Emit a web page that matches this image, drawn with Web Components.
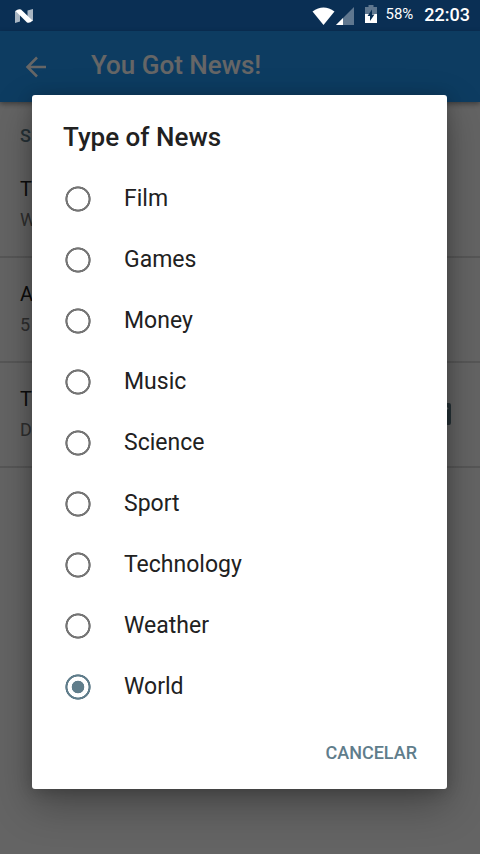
<!DOCTYPE html>
<html lang="en">
<head>
<meta charset="utf-8">
<meta name="viewport" content="width=device-width, initial-scale=1">
<title>You Got News!</title>
<style>
  html, body { margin: 0; min-height: 100%; background: #fafafa; }
  body { font-family: Roboto, "Noto Sans", sans-serif; color: #212121; }
</style>
</head>
<body>
<news-screen>
  <status-bar slot="status" battery="58%" time="22:03"></status-bar>
  <app-bar slot="bar">You Got News!</app-bar>
  <section-title>S</section-title>
  <setting-row><span>T</span><span slot="summary">W</span></setting-row>
  <setting-row><span>A</span><span slot="summary">5</span></setting-row>
  <setting-row>
    <span>T</span><span slot="summary">D</span>
    <svg slot="widget" width="28" height="22" viewBox="0 0 28 22" aria-hidden="true"><rect width="28" height="22" rx="2" fill="#607d8b"/><path d="M3 5l11 7 11-7" fill="none" stroke="#fafafa" stroke-width="2"/></svg>
  </setting-row>
  <choice-dialog slot="dialog" heading="Type of News" action="CANCELAR">
    <choice-list label="Type of News" selected="World" options="Film,Games,Money,Music,Science,Sport,Technology,Weather,World"></choice-list>
  </choice-dialog>
</news-screen>

<script>
  const define = (name, render) => customElements.define(name, class extends HTMLElement {
    constructor() {
      super();
      this.attachShadow({ mode: 'open' }).innerHTML = render(this);
    }
  });

  define('news-screen', () => `
    <style>
      :host { display: grid; grid-template-rows: auto 1fr; min-height: 100vh; }
      .body { position: relative; isolation: isolate; }
      .overlay {
        position: absolute; inset: 0; z-index: 2; background: rgba(0, 0, 0, .6);
        display: flex; align-items: center; padding: 0 33px 1px 32px;
      }
      ::slotted(choice-dialog) { flex: 1; }
    </style>
    <slot name="status"></slot>
    <div class="body">
      <slot name="bar"></slot>
      <main><slot></slot></main>
      <div class="overlay"><slot name="dialog"></slot></div>
    </div>`);

  define('status-bar', el => `
    <style>
      :host {
        display: flex; align-items: center; box-sizing: border-box; height: 31px;
        padding: 0 10px 0 14px; background: #0a2f54; color: #fff;
      }
      svg { display: block; }
      .wifi { margin-left: auto; }
      .battery { margin: 0 8px 3px 10px; }
      .level { font-size: 15px; line-height: 29px; margin-right: 11px; padding-bottom: 2px; }
      .time { font-size: 18px; font-weight: 500; line-height: 29px; padding-bottom: 2px; }
    </style>
    <svg width="20" height="16" viewBox="0 0 20 16" aria-hidden="true">
      <path d="M1 3L6 2v11.500L1 15zM13.500 2.500L19 1v12l-5.500 1z" fill="#fff" opacity=".65"/>
      <path d="M1.500 3Q4 0.500 7 1.500L18.500 12.500Q16 15.500 13 14.500z" fill="#fff"/>
    </svg>
    <svg class="wifi" width="23" height="18" viewBox="0 0 23 18" aria-hidden="true"><path d="M0.500 4.500Q11.500-3.500 22.500 4.500L11.500 18z" fill="#fff"/></svg>
    <svg width="20" height="18" viewBox="0 0 20 18" aria-hidden="true"><path d="M19 0v18H1z" fill="#fff" opacity=".35"/><path d="M8 11v7H1z" fill="#fff"/></svg>
    <svg class="battery" width="12" height="18" viewBox="0 0 12 18" aria-hidden="true">
      <path d="M3.500 0h5v2H12v7H0V2h3.500z" fill="#fff" opacity=".35"/>
      <path d="M0 9h12v9H0z" fill="#fff"/>
      <path d="M7 4.500L2.500 11H5v5l4.500-6.500H7z" fill="#0a2f54"/>
    </svg>
    <span class="level">${el.getAttribute('battery')}</span>
    <time class="time">${el.getAttribute('time')}</time>`);

  define('app-bar', () => `
    <style>
      :host {
        display: flex; align-items: center; box-sizing: border-box; height: 71px;
        padding: 0 24px; gap: 43px; position: relative; z-index: 1;
        background: #2196f3; color: #fff; box-shadow: 0 2px 5px rgba(0, 0, 0, .4);
      }
      button { padding: 0; border: 0; background: none; color: inherit; }
      svg { display: block; }
      h1 { margin: 0; font-size: 26px; font-weight: 500; line-height: 32px; padding-bottom: 3px; }
    </style>
    <button type="button" aria-label="Back">
      <svg width="24" height="24" viewBox="0 0 24 24" fill="none" stroke="currentColor" stroke-width="2.500"><path d="M22 12H4M13 2.500L3.500 12L13 21.500"/></svg>
    </button>
    <h1><slot></slot></h1>`);

  define('section-title', () => `
    <style>
      :host { display: block; padding: 22px 20px 5px; font-size: 18px; font-weight: 500; line-height: 24px; color: #607d8b; }
    </style>
    <slot></slot>`);

  define('setting-row', () => `
    <style>
      :host {
        display: flex; align-items: center; justify-content: space-between;
        padding: 23px 29px 24px 20px; border-bottom: 2px solid #dadada;
      }
      .text { display: grid; gap: 6px; }
      .title { font-size: 20px; line-height: 26px; }
      .summary { font-size: 18px; line-height: 24px; color: #757575; }
    </style>
    <div class="text">
      <div class="title"><slot></slot></div>
      <div class="summary"><slot name="summary"></slot></div>
    </div>
    <slot name="widget"></slot>`);

  define('choice-dialog', el => `
    <style>
      :host {
        display: block; background: #fff; border-radius: 3px;
        box-shadow: 0 16px 40px rgba(0, 0, 0, .3), 0 2px 16px rgba(0, 0, 0, .2);
      }
      h2 { margin: 0; padding: 26px 31px 15px; font-size: 26px; font-weight: 500; line-height: 32px; }
      footer { display: flex; justify-content: flex-end; padding: 12px 20px; }
      button {
        height: 48px; padding: 0 10px; border: 0; background: none;
        font: 500 18px/24px Roboto, "Noto Sans", sans-serif; color: #607d8b;
      }
    </style>
    <div role="dialog" aria-modal="true" aria-labelledby="heading">
      <h2 id="heading">${el.getAttribute('heading')}</h2>
      <slot></slot>
      <footer><button type="button">${el.getAttribute('action')}</button></footer>
    </div>`);

  define('choice-list', el => `
    <style>
      :host { display: block; }
      label {
        display: flex; align-items: center; gap: 33px; height: 61px; padding: 0 33px;
        font-size: 23px; line-height: 28px;
      }
      input {
        --ring: transparent 78%, currentColor 83%, currentColor 95%, transparent 100%;
        appearance: none; flex: none; width: 26px; height: 26px; margin: 0; color: #757575;
        background: radial-gradient(circle closest-side, var(--ring));
      }
      input:checked {
        color: #607d8b;
        background: radial-gradient(circle closest-side, currentColor 46%, transparent 51%, var(--ring));
      }
    </style>
    <div role="radiogroup" aria-label="${el.getAttribute('label')}">
      ${el.getAttribute('options').split(',').map(name => `
        <label><input type="radio" name="choice" value="${name}"${name === el.getAttribute('selected') ? ' checked' : ''}><span>${name}</span></label>`).join('')}
    </div>`);
</script>
</body>
</html>
